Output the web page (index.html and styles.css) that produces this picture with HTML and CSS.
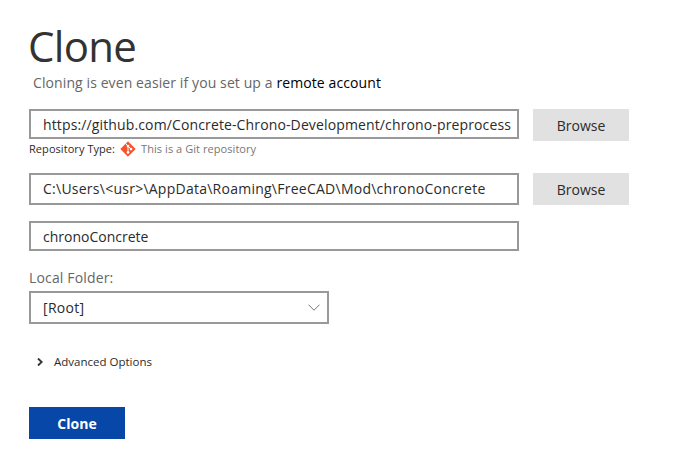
FILE: index.html
```html
<!DOCTYPE html>
<html lang="en">
<head>
<meta charset="utf-8">
<title>Clone</title>
<link rel="stylesheet" href="styles.css">
</head>
<body>
<main class="clone">
  <h1 class="title">Clone</h1>
  <p class="intro">Cloning is even easier if you set up a <a class="account">remote account</a></p>
  <div class="row source">
    <div class="field"><span class="t url">https://github.com/Concrete-Chrono-Development/chrono-preprocess</span></div>
    <button class="browse">Browse</button>
  </div>
  <div class="type">
    <span class="t type-label">Repository Type:</span>
    <svg class="git" viewBox="0 0 16 16"><path d="M8 .8 15.2 8 8 15.2.8 8Z" fill="#f8512c" stroke="#f8512c" stroke-width="1" stroke-linejoin="round"/><path d="M5.3 2.2 8 5V11.5M8 5l3 3" fill="none" stroke="#fff" stroke-width="1"/><circle cx="8" cy="5" r="1.3" fill="#fff"/><circle cx="8" cy="11.4" r="1.3" fill="#fff"/><circle cx="11" cy="8.1" r="1.3" fill="#fff"/></svg>
    <span class="t type-value">This is a Git repository</span>
  </div>
  <div class="row dest">
    <div class="field tall"><span class="t path">C:\Users\&lt;usr&gt;\AppData\Roaming\FreeCAD\Mod\chronoConcrete</span></div>
    <button class="browse">Browse</button>
  </div>
  <div class="field name"><span class="t">chronoConcrete</span></div>
  <div class="folder-label">Local Folder:</div>
  <div class="field select"><span class="t root">[Root]</span><svg class="chevron" viewBox="0 0 12 7"><path d="M.5.7 6 6.2 11.5.7" fill="none" stroke="#777"/></svg></div>
  <div class="advanced"><svg class="arrow" viewBox="0 0 6 8"><path d="M1 .5 4.7 4 1 7.5" fill="none" stroke="#333" stroke-width="1.9"/></svg><span class="t">Advanced Options</span></div>
  <button class="submit">Clone</button>
</main>
</body>
</html>
```
FILE: styles.css
```css
* { box-sizing: border-box; }
body { margin: 0; background: #fff; color: #2b2b2b; font: 14px/20px "Open Sans", "Noto Sans", sans-serif; }
.clone { padding: 22px 0 0 29px; display: flex; flex-direction: column; align-items: flex-start; width: 675px; height: 465px; }
.t { white-space: nowrap; }
.title { margin: -1px 0 1px -1px; height: 50px; font-size: 42px; line-height: 50px; font-weight: 400; letter-spacing: -.7px; color: #333; }
.intro { margin: 0 0 0 4px; height: 37px; line-height: 22px; color: #666; letter-spacing: .1px; white-space: nowrap; }
.account { color: #000; }
.row { display: flex; gap: 14px; }
.field { width: 490px; height: 30px; border: 2px solid #999; padding: 1px 0 0 12px; display: flex; align-items: center; overflow: hidden; }
.tall { height: 32px; padding-top: 0; }
.url { letter-spacing: .13px; }
.path { letter-spacing: .25px; }
.browse { width: 96px; height: 32px; border: 0; padding: 1px 0 0; background: #e1e1e1; color: #2b2b2b; font: inherit; }
.type { display: flex; height: 16px; align-items: center; font-size: 11px; letter-spacing: .06px; }
.git { width: 16px; height: 16px; margin: 0 5px 0 5px; }
.type-value { color: #777; }
.dest { margin-top: 16px; }
.name { margin-top: 16px; }
.folder-label { margin-top: 17px; height: 23px; color: #666; letter-spacing: .15px; }
.select { width: 300px; height: 33px; justify-content: space-between; padding: 0 7px 0 12px; }
.root { letter-spacing: .3px; }
.chevron { width: 12px; height: 7px; }
.advanced { display: flex; align-items: center; height: 20px; margin: 28px 0 0 8px; font-size: 11.5px; }
.arrow { width: 6px; height: 8px; margin-right: 11px; }
.submit { width: 96px; height: 32px; margin-top: 35px; border: 0; padding: 0; background: #0647a8; color: #fff; font: bold 14px "Open Sans", sans-serif; }
```
